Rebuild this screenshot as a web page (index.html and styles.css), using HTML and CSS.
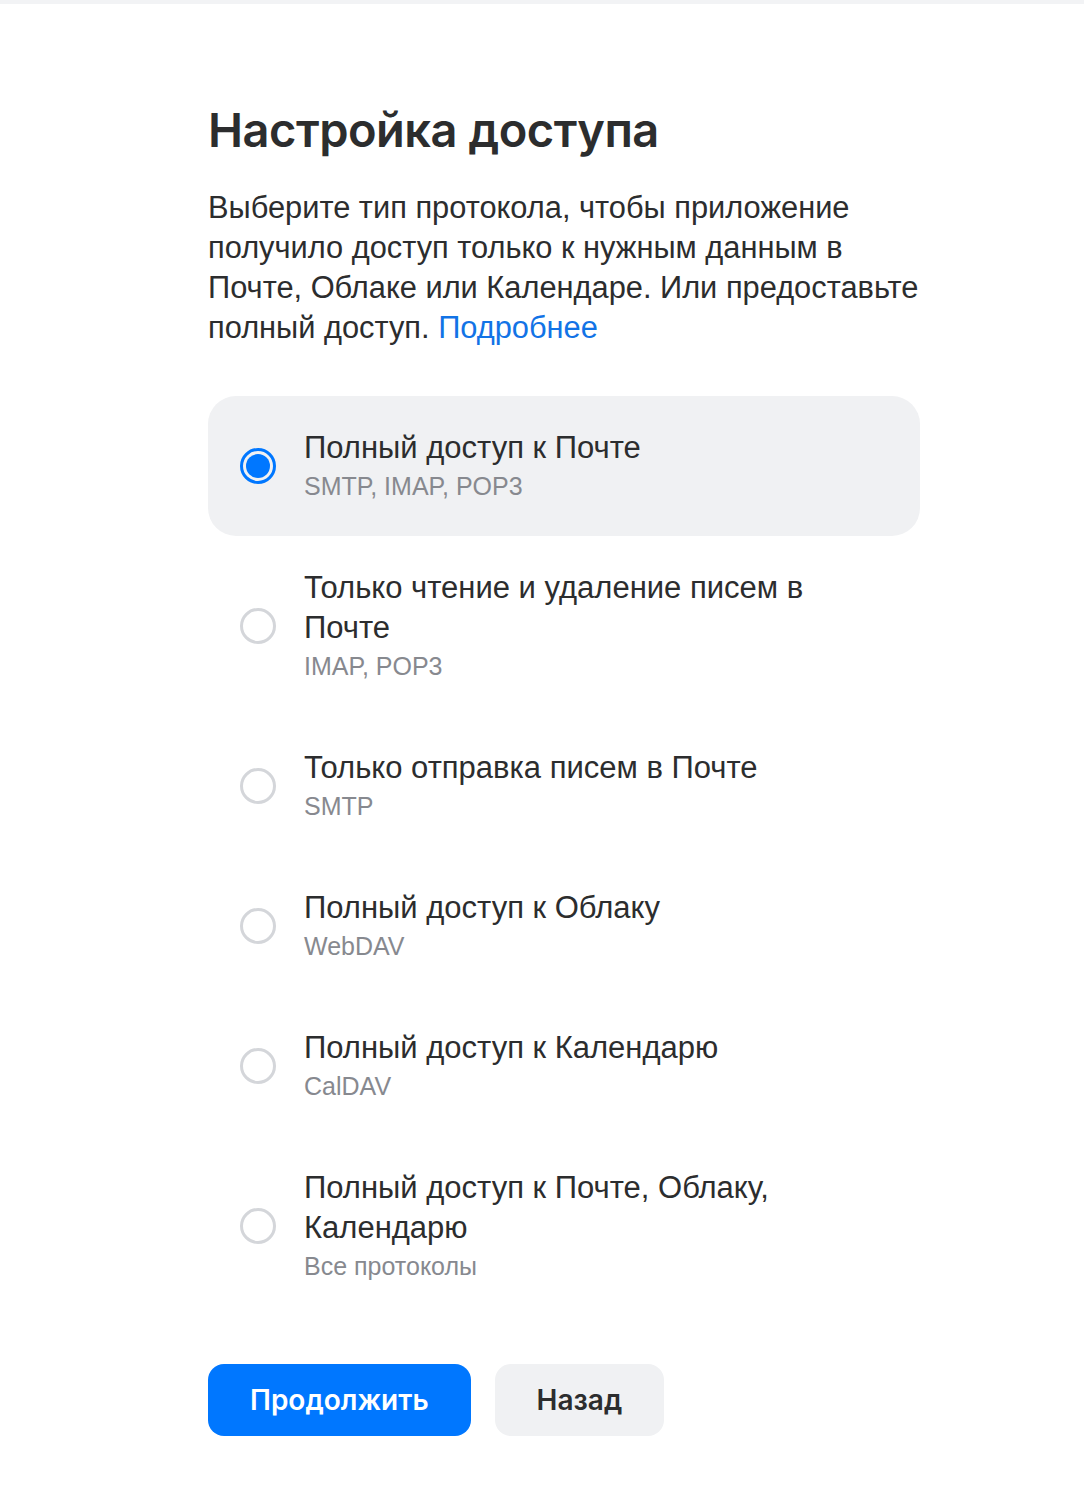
FILE: index.html
```html
<!DOCTYPE html>
<html lang="ru">
<head>
  <meta charset="UTF-8" />
  <title>Настройка доступа</title>
  <link rel="stylesheet" href="styles.css">
</head>
<body>

<div class="top-strip"></div>

<div class="page">
  <h1 class="title">Настройка доступа</h1>
  <p class="lead">Выберите тип протокола, чтобы приложение получило доступ только к нужным данным в Почте, Облаке или Календаре. Или предоставьте полный доступ. <a href="#" class="link">Подробнее</a></p>

  <div class="options">
    <label class="option selected">
      <span class="radio"></span>
      <span class="option-text">
        <span class="option-title">Полный доступ к Почте</span>
        <span class="option-sub">SMTP, IMAP, POP3</span>
      </span>
    </label>
    <label class="option">
      <span class="radio"></span>
      <span class="option-text">
        <span class="option-title">Только чтение и удаление писем в Почте</span>
        <span class="option-sub">IMAP, POP3</span>
      </span>
    </label>
    <label class="option">
      <span class="radio"></span>
      <span class="option-text">
        <span class="option-title">Только отправка писем в Почте</span>
        <span class="option-sub">SMTP</span>
      </span>
    </label>
    <label class="option">
      <span class="radio"></span>
      <span class="option-text">
        <span class="option-title">Полный доступ к Облаку</span>
        <span class="option-sub">WebDAV</span>
      </span>
    </label>
    <label class="option">
      <span class="radio"></span>
      <span class="option-text">
        <span class="option-title">Полный доступ к Календарю</span>
        <span class="option-sub">CalDAV</span>
      </span>
    </label>
    <label class="option">
      <span class="radio"></span>
      <span class="option-text">
        <span class="option-title">Полный доступ к Почте, Облаку, Календарю</span>
        <span class="option-sub">Все протоколы</span>
      </span>
    </label>
  </div>

  <div class="actions">
    <button class="btn btn-primary">Продолжить</button>
    <button class="btn btn-secondary">Назад</button>
  </div>
</div>

</body>
</html>
```

FILE: styles.css
```css
* { box-sizing: border-box; }
body {
  margin: 0;
  background: #fff;
  color: #2c2d2e;
  font-family: 'Liberation Sans', Arial, sans-serif;
}

.top-strip {
  height: 4px;
  background: #f2f3f5;
}

.page {
  width: 712px;
  margin-left: 208px;
  padding-top: 100px;
  padding-bottom: 66px;
}

.title {
  margin: 0;
  font-family: Inter, sans-serif;
  font-size: 47px;
  font-weight: 600;
  line-height: 52px;
  letter-spacing: -0.5px;
  color: #2c2d2e;
}

.lead {
  margin: 32px -8px 48px 0;
  font-size: 30.8px;
  line-height: 40px;
  color: #2c2d2e;
}

.link {
  color: #1273e6;
  text-decoration: none;
}

.options {
  display: flex;
  flex-direction: column;
}

.option {
  display: flex;
  align-items: center;
  gap: 28px;
  padding: 32px 32px;
  border-radius: 28px;
  cursor: pointer;
}
.option.selected { background: #f0f1f3; }

.radio {
  flex: none;
  width: 36px;
  height: 36px;
  border-radius: 50%;
  border: 3px solid #d4d6da;
  position: relative;
}
.option.selected .radio { border-color: #0077ff; }
.option.selected .radio::after {
  content: "";
  position: absolute;
  top: 3px;
  left: 3px;
  width: 24px;
  height: 24px;
  border-radius: 50%;
  background: #0077ff;
}

.option-text {
  display: flex;
  flex-direction: column;
}
.option-title {
  font-size: 31px;
  line-height: 40px;
  color: #2c2d2e;
}
.option-sub {
  font-size: 25px;
  line-height: 36px;
  color: #87898f;
}

.actions {
  display: flex;
  gap: 24px;
  margin-top: 48px;
}

.btn {
  height: 72px;
  border: none;
  border-radius: 16px;
  padding: 0 42px;
  font-family: Inter, sans-serif;
  font-size: 28px;
  font-weight: 600;
  cursor: pointer;
}
.btn-primary { background: #0077ff; color: #fff; }
.btn-secondary { background: #f0f1f3; color: #2c2d2e; }
```
